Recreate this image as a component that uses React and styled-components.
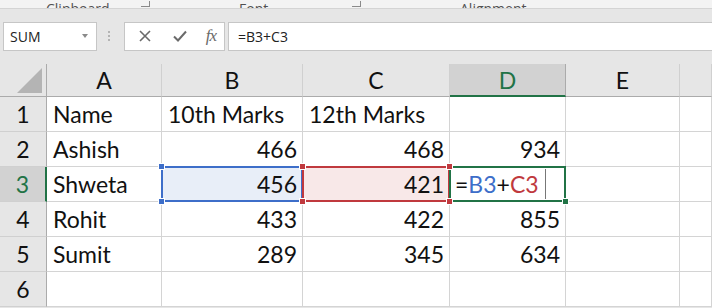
import React from "react";
import styled, { createGlobalStyle, css } from "styled-components";

const Global = createGlobalStyle`
  html, body { margin: 0; padding: 0; background: #ffffff; }
  body { width: 712px; height: 308px; overflow: hidden; font-family: "Lato", "Liberation Sans", sans-serif; }
`;

const GREEN = "#217346";
const BLUE = "#3d6ec9";
const RED = "#c0393e";

const Page = styled.div`
  width: 712px;
  height: 308px;
  display: flex;
  flex-direction: column;
  background: #e6e6e6;
  overflow: hidden;
`;

const Ribbon = styled.div`
  height: 8px;
  background: #f3f3f3;
  border-bottom: 1px solid #d4d4d4;
  display: flex;
  align-items: flex-end;
  overflow: hidden;
  position: relative;
  box-sizing: content-box;
`;

const RibbonLabel = styled.span`
  position: absolute;
  left: ${(p) => p.$x}px;
  bottom: -9px;
  font-family: "Open Sans", "Liberation Sans", sans-serif;
  font-size: 14px;
  color: #505050;
  line-height: 16px;
`;

const Launcher = styled.span`
  position: absolute;
  left: ${(p) => p.$x}px;
  bottom: 1px;
  width: 8px;
  height: 5px;
  border-right: 1px solid #8a8a8a;
  border-bottom: 1px solid #8a8a8a;
`;

const FormulaBar = styled.div`
  height: 54px;
  display: flex;
  align-items: center;
  padding: 0 0 0 3px;
`;

const NameBox = styled.div`
  width: 94px;
  height: 29px;
  background: #fff;
  border: 1px solid #c6c6c6;
  display: flex;
  align-items: center;
  justify-content: space-between;
  padding: 0 6px;
  box-sizing: border-box;
  font-family: "Open Sans", "Liberation Sans", sans-serif;
  font-size: 14px;
  color: #222;
`;

const Caret = styled.span`
  width: 0;
  height: 0;
  border-left: 3.5px solid transparent;
  border-right: 3.5px solid transparent;
  border-top: 4px solid #8a8a8a;
  margin-right: 2px;
`;

const Grip = styled.div`
  width: 3px;
  margin: 0 13px 0 11px;
  display: flex;
  flex-direction: column;
  gap: 2px;
  span { width: 2px; height: 2px; background: #b4b4b4; display: block; }
`;

const ButtonsBox = styled.div`
  width: 101px;
  height: 29px;
  background: #fff;
  border: 1px solid #c6c6c6;
  box-sizing: border-box;
  display: flex;
  align-items: center;
  padding-left: 5px;
`;

const IconSlot = styled.span`
  width: ${(p) => p.$w}px;
  display: flex;
  align-items: center;
  justify-content: center;
  color: #6a6a6a;
`;

const Fx = styled.span`
  font-family: "Liberation Serif", "DejaVu Serif", serif;
  font-style: italic;
  font-size: 17px;
  color: #6a6a6a;
  letter-spacing: -1px;
`;

const FormulaInput = styled.div`
  flex: 1;
  height: 29px;
  margin-left: 3px;
  background: #fff;
  border: 1px solid #c6c6c6;
  border-right: none;
  box-sizing: border-box;
  display: flex;
  align-items: center;
  padding-left: 9px;
  font-family: "Open Sans", "Liberation Sans", sans-serif;
  font-size: 14px;
  color: #222;
`;

const Sheet = styled.div`
  display: grid;
  grid-template-columns: 47px 115px 141px 147px 116px 114px 1fr;
  grid-template-rows: 33px repeat(6, 35px);
  background: #fff;
  margin-top: 1px;
`;

const Corner = styled.div`
  background: #e6e6e6;
  border-right: 1px solid #ababab;
  border-bottom: 1px solid #ababab;
  position: relative;
  box-sizing: border-box;
  svg { position: absolute; right: 4px; bottom: 3px; }
`;

const ColHead = styled.div`
  background: ${(p) => (p.$active ? "#d2d2d2" : "#e6e6e6")};
  border-right: 1px solid ${(p) => (p.$active ? "#ababab" : "#d0d0d0")};
  border-bottom: ${(p) => (p.$active ? `2px solid ${GREEN}` : "1px solid #ababab")};
  box-sizing: border-box;
  display: flex;
  align-items: center;
  justify-content: center;
  font-size: 23px;
  color: ${(p) => (p.$active ? GREEN : "#111")};
  padding-top: ${(p) => (p.$active ? "1px" : "0")};
`;

const RowHead = styled.div`
  background: ${(p) => (p.$active ? "#d2d2d2" : "#e6e6e6")};
  border-right: ${(p) => (p.$active ? `2px solid ${GREEN}` : "1px solid #ababab")};
  border-bottom: 1px solid #d0d0d0;
  box-sizing: border-box;
  display: flex;
  align-items: center;
  justify-content: center;
  font-size: 23px;
  color: ${(p) => (p.$active ? GREEN : "#111")};
`;

const selBorder = (color, fill) => css`
  background: ${fill};
  &::after {
    content: "";
    position: absolute;
    left: -1px;
    top: -1px;
    right: -1px;
    bottom: -1px;
    border: 2px solid ${color};
    pointer-events: none;
  }
`;

const Cell = styled.div`
  position: relative;
  border-right: 1px solid #d4d4d4;
  border-bottom: 1px solid #d4d4d4;
  box-sizing: border-box;
  display: flex;
  align-items: center;
  justify-content: ${(p) => (p.$num ? "flex-end" : "flex-start")};
  padding: 0 5px 0 ${(p) => (p.$formula ? 5 : 6)}px;
  font-size: 23px;
  color: #111;
  white-space: nowrap;
  ${(p) => p.$sel === "blue" && selBorder(BLUE, "#e8eef8")}
  ${(p) => p.$sel === "red" && selBorder(RED, "#f8e8e8")}
  ${(p) => p.$sel === "green" && selBorder(GREEN, "#fff")}
`;

const Handle = styled.span`
  position: absolute;
  width: 5px;
  height: 5px;
  background: ${(p) => p.$color};
  border: 1px solid #fff;
  z-index: 2;
  ${(p) => (p.$v === "t" ? "top: -4px;" : "bottom: -4px;")}
  ${(p) => (p.$h === "l" ? "left: -4px;" : "right: -4px;")}
`;

const Ref = styled.span`
  color: ${(p) => p.$color};
`;

const Cursor = styled.span`
  display: inline-block;
  width: 1px;
  height: 30px;
  background: #777;
  margin-left: 6px;
`;

const cols = ["A", "B", "C", "D", "E", ""];
const rows = [
  ["Name", "10th Marks", "12th Marks", "", "", ""],
  ["Ashish", "466", "468", "934", "", ""],
  ["Shweta", "456", "421", "=", "", ""],
  ["Rohit", "433", "422", "855", "", ""],
  ["Sumit", "289", "345", "634", "", ""],
  ["", "", "", "", "", ""],
];

const Corners = ({ color, which }) =>
  which.map((w) => <Handle key={w} $color={color} $v={w[0]} $h={w[1]} />);

export default function App() {
  return (
    <Page>
      <Global />
      <Ribbon>
        <RibbonLabel $x={46}>Clipboard</RibbonLabel>
        <Launcher $x={141} />
        <RibbonLabel $x={239}>Font</RibbonLabel>
        <Launcher $x={352} />
        <RibbonLabel $x={460}>Alignment</RibbonLabel>
      </Ribbon>
      <FormulaBar>
        <NameBox>
          <span>SUM</span>
          <Caret />
        </NameBox>
        <Grip>
          <span />
          <span />
          <span />
        </Grip>
        <ButtonsBox>
          <IconSlot $w={30}>
            <svg width="12" height="12" viewBox="0 0 12 12">
              <path d="M1 1 L11 11 M11 1 L1 11" stroke="#6a6a6a" strokeWidth="1.6" />
            </svg>
          </IconSlot>
          <IconSlot $w={40}>
            <svg width="14" height="12" viewBox="0 0 14 12">
              <path d="M1 6.5 L5 10.5 L13 1.5" stroke="#6a6a6a" strokeWidth="2" fill="none" />
            </svg>
          </IconSlot>
          <IconSlot $w={22}>
            <Fx>fx</Fx>
          </IconSlot>
        </ButtonsBox>
        <FormulaInput>=B3+C3</FormulaInput>
      </FormulaBar>
      <Sheet>
        <Corner>
          <svg width="25" height="25" viewBox="0 0 25 25">
            <path d="M25 0 L25 25 L0 25 Z" fill="#b4b4b4" />
          </svg>
        </Corner>
        {cols.map((c, i) => (
          <ColHead key={i} $active={c === "D"}>
            {c}
          </ColHead>
        ))}
        {rows.map((r, ri) => (
          <React.Fragment key={ri}>
            <RowHead $active={ri === 2}>{ri + 1}</RowHead>
            {r.map((v, ci) => {
              const isNum = /^\d+$/.test(v);
              if (ri === 2 && ci === 1)
                return (
                  <Cell key={ci} $num $sel="blue">
                    {v}
                    <Corners color={BLUE} which={["tl", "bl"]} />
                  </Cell>
                );
              if (ri === 2 && ci === 2)
                return (
                  <Cell key={ci} $num $sel="red">
                    {v}
                    <Corners color={RED} which={["tl", "bl", "tr", "br"]} />
                  </Cell>
                );
              if (ri === 2 && ci === 3)
                return (
                  <Cell key={ci} $sel="green" $formula>
                    =<Ref $color={BLUE}>B3</Ref>+<Ref $color={RED}>C3</Ref>
                    <Cursor />
                    <Handle $color={GREEN} $v="b" $h="r" />
                  </Cell>
                );
              return (
                <Cell key={ci} $num={isNum}>
                  {v}
                </Cell>
              );
            })}
          </React.Fragment>
        ))}
      </Sheet>
    </Page>
  );
}
